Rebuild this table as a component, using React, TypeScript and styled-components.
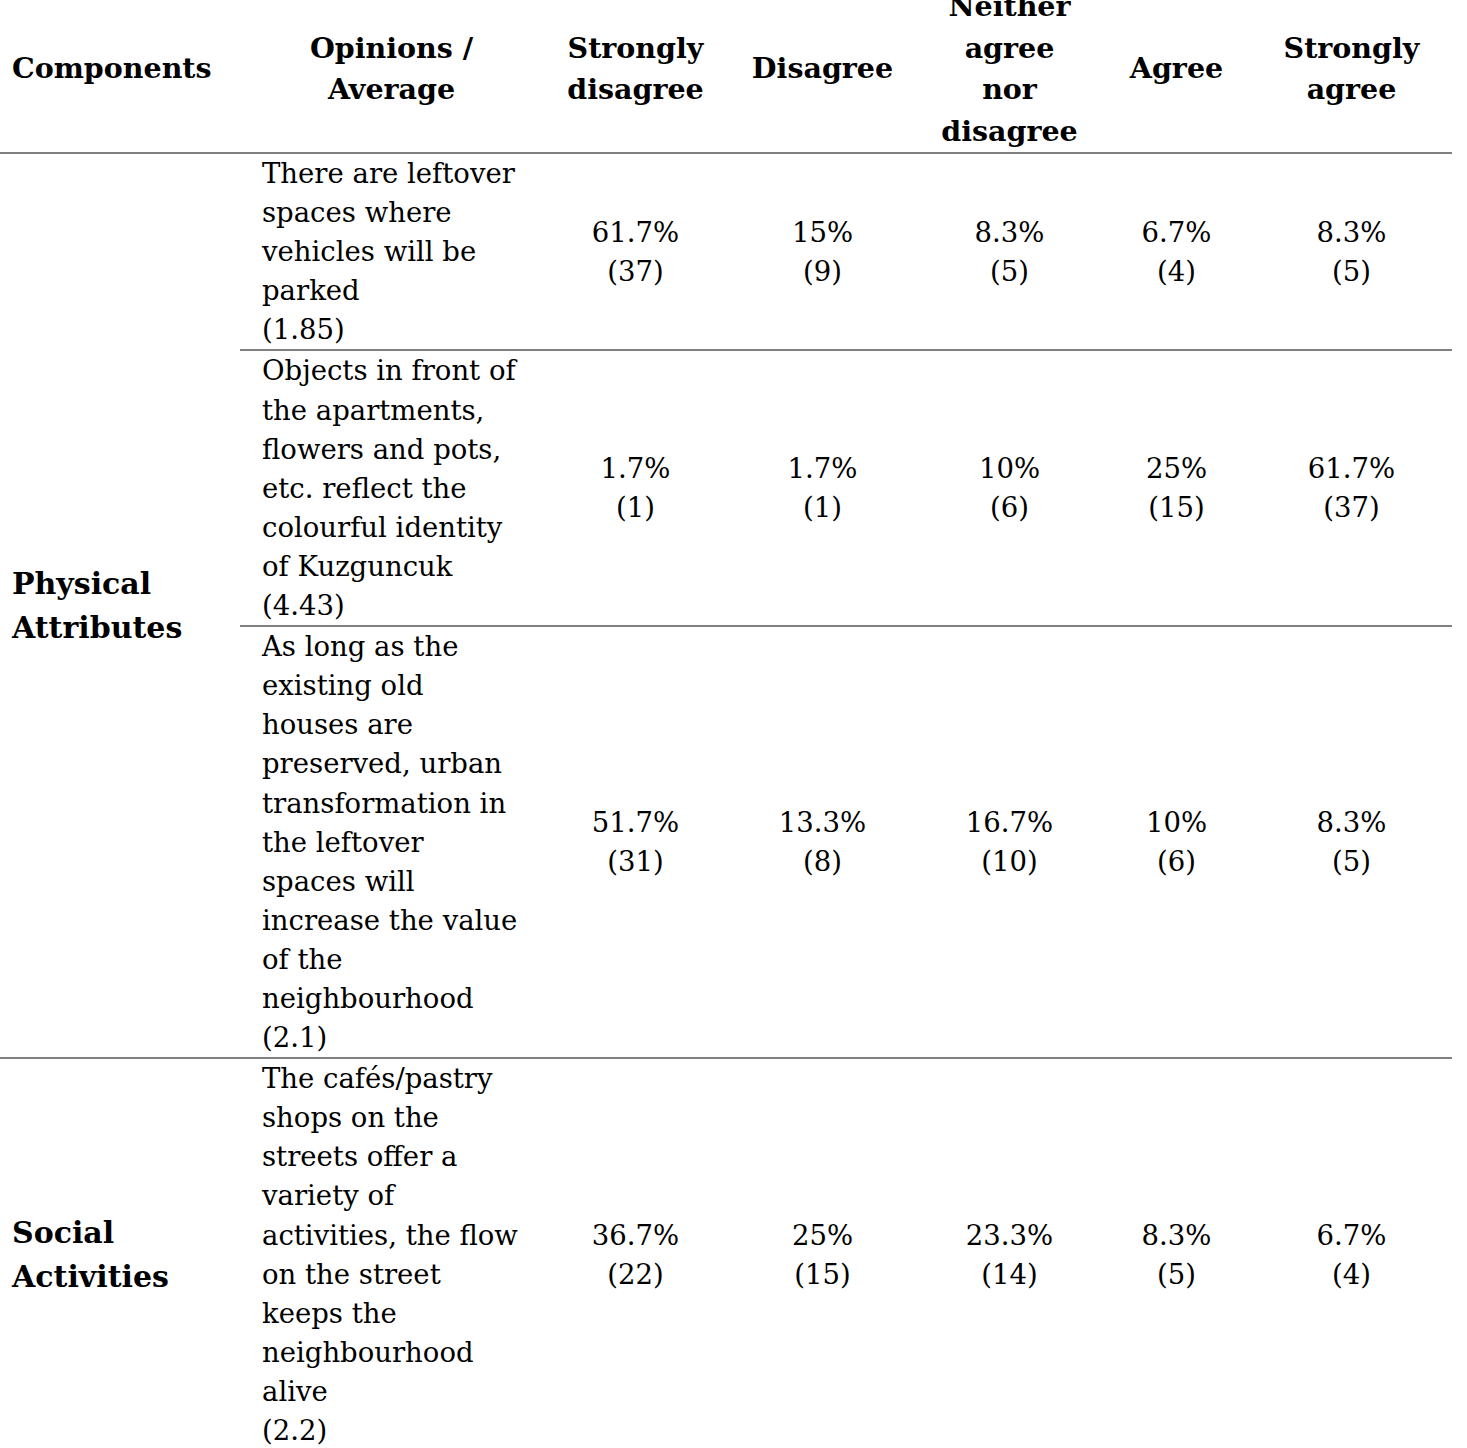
import React from "react";
import styled, {createGlobalStyle} from "styled-components";

const GlobalStyle = createGlobalStyle`
  html, body {
    margin: 0;
    padding: 0;
    background: #ffffff;
  }
  body {
    font-family: "DejaVu Serif", "Liberation Serif", serif;
    color: #000000;
  }
`;

const Page = styled.div`
  margin-top: -14px;
  width: 1452px;
`;

const Table = styled.table`
  width: 1452px;
  border-collapse: collapse;
  table-layout: fixed;
`;

const Head = styled.th<{ $align?: "left" | "center"; $pad?: number }>`
  font-size: 28.5px;
  line-height: 41.5px;
  font-weight: bold;
  text-align: ${p => p.$align || "center"};
  padding: 0 0 0 ${p => p.$pad || 0}px;
  vertical-align: middle;
  white-space: nowrap;
  border-bottom: 2px solid #808080;
`;

const GroupCell = styled.td`
  font-size: 30px;
  line-height: 44px;
  font-weight: bold;
  padding: 0 0 0 12px;
  vertical-align: middle;
  white-space: nowrap;
  border-bottom: 2px solid #808080;
`;

const Statement = styled.td`
  font-size: 27.5px;
  line-height: 39.1px;
  padding: 0 0 0 22px;
  vertical-align: middle;
  white-space: nowrap;
  border-bottom: 2px solid #808080;
`;

const Value = styled.td`
  font-size: 27.5px;
  line-height: 39px;
  padding: 0;
  text-align: center;
  vertical-align: middle;
  white-space: nowrap;
  border-bottom: 2px solid #808080;
`;

const Line = styled.span`
  display: block;
`;

type Item = {
    lines: string[]
    avg: string
    values: [string, string][]
}

type Group = {
    name: string[]
    items: Item[]
}

const widths = [240, 303, 185, 189, 185, 149, 201];

const headers = [
    ["Strongly", "disagree"],
    ["Disagree"],
    ["Neither", "agree", "nor", "disagree"],
    ["Agree"],
    ["Strongly", "agree"],
];

const groups: Group[] = [
    {
        name: ["Physical", "Attributes"],
        items: [
            {
                lines: ["There are leftover", "spaces where", "vehicles will be", "parked"],
                avg: "1.85",
                values: [["61.7%", "37"], ["15%", "9"], ["8.3%", "5"], ["6.7%", "4"], ["8.3%", "5"]],
            },
            {
                lines: ["Objects in front of", "the apartments,", "flowers and pots,", "etc. reflect the", "colourful identity", "of Kuzguncuk"],
                avg: "4.43",
                values: [["1.7%", "1"], ["1.7%", "1"], ["10%", "6"], ["25%", "15"], ["61.7%", "37"]],
            },
            {
                lines: ["As long as the", "existing old", "houses are", "preserved, urban", "transformation in", "the leftover", "spaces will", "increase the value", "of the", "neighbourhood"],
                avg: "2.1",
                values: [["51.7%", "31"], ["13.3%", "8"], ["16.7%", "10"], ["10%", "6"], ["8.3%", "5"]],
            },
        ],
    },
    {
        name: ["Social", "Activities"],
        items: [
            {
                lines: ["The cafés/pastry", "shops on the", "streets offer a", "variety of", "activities, the flow", "on the street", "keeps the", "neighbourhood", "alive"],
                avg: "2.2",
                values: [["36.7%", "22"], ["25%", "15"], ["23.3%", "14"], ["8.3%", "5"], ["6.7%", "4"]],
            },
        ],
    },
];

const App = () => {
    return (
        <Page>
            <GlobalStyle/>
            <Table>
                <colgroup>
                    {widths.map((w, i) => <col key={i} style={{width: w}}/>)}
                </colgroup>
                <thead>
                <tr>
                    <Head $align="left" $pad={12}>Components</Head>
                    <Head>
                        <Line>Opinions /</Line>
                        <Line>Average</Line>
                    </Head>
                    {headers.map((h, i) =>
                        <Head key={i}>
                            {h.map(l => <Line key={l}>{l}</Line>)}
                        </Head>
                    )}
                </tr>
                </thead>
                <tbody>
                {groups.map(g =>
                    g.items.map((item, i) =>
                        <tr key={g.name.join() + i}>
                            {i === 0 &&
                                <GroupCell rowSpan={g.items.length}>
                                    {g.name.map(n => <Line key={n}>{n}</Line>)}
                                </GroupCell>
                            }
                            <Statement>
                                {item.lines.map(l => <Line key={l}>{l}</Line>)}
                                <Line>({item.avg})</Line>
                            </Statement>
                            {item.values.map((v, j) =>
                                <Value key={j}>
                                    <Line>{v[0]}</Line>
                                    <Line>({v[1]})</Line>
                                </Value>
                            )}
                        </tr>
                    )
                )}
                </tbody>
            </Table>
        </Page>
    )
}

export default App
